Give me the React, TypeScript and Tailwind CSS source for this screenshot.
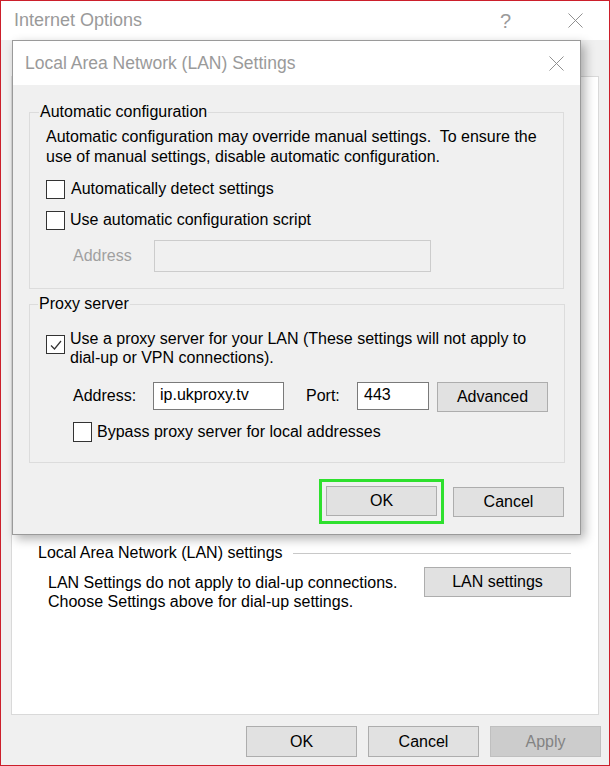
import React from 'react';

const font = "font-['Segoe_UI','Liberation_Sans',Arial,sans-serif]";

const CloseIcon: React.FC<{ className?: string }> = ({ className }) => (
  <svg viewBox="0 0 16 16" className={className} fill="none" stroke="currentColor" strokeWidth="1">
    <path d="M0.5 0.5 L15.5 15.5 M15.5 0.5 L0.5 15.5" />
  </svg>
);

const Checkbox: React.FC<{ checked?: boolean; size?: string }> = ({ checked, size = 'w-[19px] h-[19px]' }) => (
  <span className={`${size} shrink-0 bg-white border border-[#333] flex items-center justify-center`}>
    {checked && (
      <svg viewBox="0 0 14 14" className="w-[14px] h-[14px]" fill="none" stroke="#333" strokeWidth="1.2">
        <path d="M2 7.5 L5.5 11 L12 3" />
      </svg>
    )}
  </span>
);

const Button: React.FC<{ label: string; w?: string; h?: string; disabled?: boolean }> = ({
  label,
  w = 'w-[111px]',
  h = 'h-[30px]',
  disabled,
}) => (
  <button
    className={`${w} ${h} border text-[16px] ${
      disabled ? 'bg-[#cccccc] border-[#bfbfbf] text-[#838383]' : 'bg-[#e1e1e1] border-[#adadad] text-black'
    }`}
  >
    {label}
  </button>
);

export default function App() {
  return (
    <div className={`${font} relative w-[610px] h-[766px] border border-[#cc1f2b] bg-[#f0f0f0] overflow-hidden text-[16px] text-black`}>
      {/* Internet Options title bar */}
      <div className="h-[39px] bg-white flex items-center pl-[13px] pr-[26px]">
        <span className="text-[18px] text-[#9a9a9a] flex-1">Internet Options</span>
        <span className="text-[20px] text-[#9a9a9a] mr-[57px]">?</span>
        <CloseIcon className="w-[15px] h-[15px] text-[#8a8a8a]" />
      </div>

      {/* Tab page */}
      <div className="ml-[10px] mt-[36px] w-[588px] h-[639px] bg-white border border-[#d9d9d9] pt-[464px] pl-[26px] pr-[27px]">
        <div className="flex items-center gap-[10px]">
          <span>Local Area Network (LAN) settings</span>
          <div className="flex-1 h-px bg-[#c8c8c8]" />
        </div>
        <div className="flex items-start justify-between mt-[2px]">
          <p className="pl-[10px] mt-[6px] leading-[19px]">
            LAN Settings do not apply to dial-up connections.
            <br />
            Choose Settings above for dial-up settings.
          </p>
          <Button label="LAN settings" w="w-[147px]" />
        </div>
      </div>

      <div className="flex justify-end gap-[11px] pr-[8px] mt-[11px]">
        <Button label="OK" h="h-[31px]" />
        <Button label="Cancel" h="h-[31px]" />
        <Button label="Apply" h="h-[31px]" disabled />
      </div>

      {/* LAN Settings dialog */}
      <div className="absolute left-[11px] top-[39px] w-[569px] h-[495px] bg-[#f0f0f0] border border-[#9a9a9a] shadow-[4px_4px_10px_rgba(0,0,0,0.3)] flex flex-col">
        <div className="h-[44px] bg-white flex items-center pl-[12px] pr-[16px]">
          <span className="text-[17.5px] text-[#9a9a9a] flex-1">Local Area Network (LAN) Settings</span>
          <CloseIcon className="w-[15px] h-[15px] text-[#8a8a8a]" />
        </div>

        <div className="px-[16px] pt-[18px]">
          {/* Automatic configuration */}
          <fieldset className="border border-[#dcdcdc] h-[186px] px-[16px] pb-0 m-0">
            <legend className="px-[1px] -ml-[7px] leading-[18px]">Automatic configuration</legend>
            <p className="leading-[20px] mt-[6px]">
              Automatic configuration may override manual settings.&nbsp; To ensure the
              <br />
              use of manual settings, disable automatic configuration.
            </p>
            <label className="flex items-center gap-[6px] mt-[10px]">
              <Checkbox />
              <span>Automatically detect settings</span>
            </label>
            <label className="flex items-center gap-[5px] mt-[7px]">
              <Checkbox />
              <span>Use automatic configuration script</span>
            </label>
            <div className="flex items-center mt-[8px] pl-[27px]">
              <span className="text-[#a0a0a0] w-[81px]">Address</span>
              <div className="w-[277px] h-[32px] border border-[#cccccc] bg-[#f0f0f0]" />
            </div>
          </fieldset>

          {/* Proxy server */}
          <fieldset className="border border-[#dcdcdc] h-[168px] mt-[6px] px-[16px] m-0">
            <legend className="px-[1px] -ml-[8px] leading-[18px]">Proxy server</legend>
            <label className="flex items-start gap-[5px] mt-[16px]">
              <span className="mt-[6px]">
                <Checkbox checked />
              </span>
              <span className="leading-[19px]">
                Use a proxy server for your LAN (These settings will not apply to
                <br />
                dial-up or VPN connections).
              </span>
            </label>
            <div className="flex items-center mt-[12px] pl-[27px]">
              <span className="w-[80px]">Address:</span>
              <div className="w-[131px] h-[28px] border border-[#7a7a7a] bg-white px-[6px] leading-[24px]">ip.ukproxy.tv</div>
              <span className="ml-[22px] w-[51px]">Port:</span>
              <div className="w-[72px] h-[28px] border border-[#7a7a7a] bg-white px-[6px] leading-[24px]">443</div>
              <span className="ml-[8px] mt-[3px]">
                <Button label="Advanced" />
              </span>
            </div>
            <label className="flex items-center gap-[5px] mt-[8px] pl-[27px]">
              <Checkbox size="w-[19px] h-[20px]" />
              <span>Bypass proxy server for local addresses</span>
            </label>
          </fieldset>

          <div className="flex justify-end items-center gap-[9px] mt-[16px]">
            <div className="border-[3px] border-[#2ee02e] p-[4px] pb-[5px]">
              <Button label="OK" />
            </div>
            <Button label="Cancel" />
          </div>
        </div>
      </div>
    </div>
  );
}
